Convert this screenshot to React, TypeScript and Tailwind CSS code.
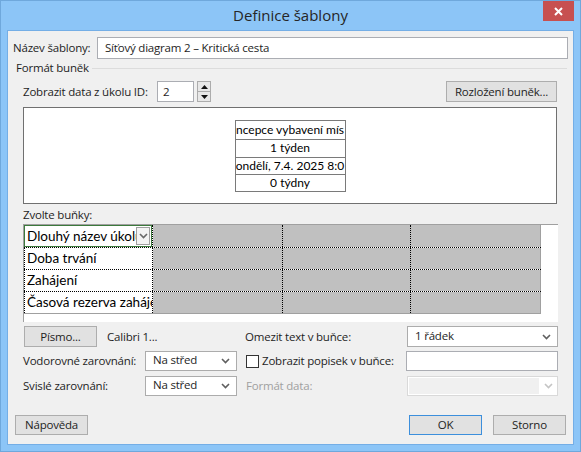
const ui = "font-['Open_Sans',sans-serif] text-[11.5px] tracking-[-0.2px] text-[#1e1e1e] whitespace-nowrap";
const calibri = "font-['Lato',sans-serif] tracking-normal";

function Chevron({ color = "#5f5f5f" }: { color?: string }) {
  return (
    <svg width="9" height="6" viewBox="0 0 9 6" className="block">
      <path d="M1 1 L4.5 4.5 L8 1" fill="none" stroke={color} strokeWidth="1.6" />
    </svg>
  );
}

function Button({ label, width, primary }: { label: string; width: string; primary?: boolean }) {
  return (
    <button
      type="button"
      className={`${width} flex h-full items-center justify-center border bg-[#e1e1e1] leading-none ${
        primary ? "border-[#3c8fdc]" : "border-[#adadad]"
      }`}
    >
      {label}
    </button>
  );
}

function Combo({ value, width }: { value: string; width: string }) {
  return (
    <div className={`${width} flex h-full items-center border border-[#acacac] bg-white pl-[7px] pr-[6px]`}>
      <span className="-mt-[2px] flex-1">{value}</span>
      <Chevron />
    </div>
  );
}

const cellLines = "border-r border-dotted border-black";

function GridRow({ first, height, last, children }: { first?: boolean; height: string; last?: boolean; children: React.ReactNode }) {
  return (
    <div
      className={`flex ${height} ${last ? "border-b border-solid border-[#a0a0a0]" : "border-b border-dotted border-black"}`}
    >
      <div className={`w-[129px] ${first ? "" : "border-l border-dotted border-black"} ${cellLines} overflow-hidden bg-white`}>
        {children}
      </div>
      <div className={`w-[130px] bg-[#c0c0c0] ${cellLines}`} />
      <div className={`w-[128px] bg-[#c0c0c0] ${cellLines}`} />
      <div className="w-[130px] border-r border-[#a0a0a0] bg-[#c0c0c0]" />
    </div>
  );
}

export default function App() {
  const node = ["ncepce vybavení mís", "1 týden", "ondělí, 7.4. 2025 8:0", "0 týdny"];
  const nodeHeights = ["h-[18px]", "h-[18px]", "h-[17px]", "h-[17px]"];

  return (
    <div className={`${ui} flex h-[452px] w-[581px] flex-col border border-[#6fa8dc] bg-[#8cc5f7]`}>
      {/* title bar */}
      <div className="relative flex h-[29px] items-center justify-center">
        <span className="-mt-[1px] text-[15px] tracking-normal text-[#262626]">Definice šablony</span>
        <div className="absolute right-[6px] top-0 flex h-[20px] w-[31px] items-center justify-center bg-[#c75050]">
          <svg width="9" height="9" viewBox="0 0 9 9">
            <path d="M1 1 L8 8 M8 1 L1 8" stroke="white" strokeWidth="2" />
          </svg>
        </div>
      </div>

      {/* client */}
      <div className="mx-[6px] flex h-[415px] flex-col border border-[#74aee6] bg-[#f0f0f0]">
        <div className="mt-[6px] flex h-[22px] items-center">
          <span className="w-[89px] pl-[5px]">Název šablony:</span>
          <div className="flex h-full w-[471px] items-center border border-[#abadb3] bg-white pl-[7px]">
            Síťový diagram 2 – Kritická cesta
          </div>
        </div>

        <div className="mt-[2px] flex h-[14px] items-center">
          <span className="pl-[8px]">Formát buněk</span>
          <div className="ml-[3px] mr-[6px] h-px flex-1 bg-[#dcdcdc]" />
        </div>

        <div className="mt-[6px] flex h-[21px] items-center">
          <span className="w-[149px] pl-[15px]">Zobrazit data z úkolu ID:</span>
          <div className="flex h-full w-[37px] items-center border border-[#abadb3] bg-white pl-[5px]">2</div>
          <div className="ml-[3px] flex h-full w-[14px] flex-col">
            <div className="flex flex-1 items-center justify-center border border-[#acacac] bg-[#e8e8e8]">
              <svg width="7" height="4" viewBox="0 0 7 4"><path d="M0 4 L3.5 0 L7 4 Z" fill="#111" /></svg>
            </div>
            <div className="flex flex-1 items-center justify-center border border-t-0 border-[#acacac] bg-[#e8e8e8]">
              <svg width="7" height="4" viewBox="0 0 7 4"><path d="M0 0 L3.5 4 L7 0 Z" fill="#111" /></svg>
            </div>
          </div>
          <div className="flex-1" />
          <Button label="Rozložení buněk..." width="w-[111px]" />
          <div className="w-[16px]" />
        </div>

        <div className="ml-[15px] mt-[5px] flex h-[97px] w-[534px] items-center justify-center border border-[#707070] bg-white">
          <div className={`${calibri} flex w-[111px] flex-col border border-[#7a7a7a] text-[12px] text-black`}>
            {node.map((t, i) => (
              <div
                key={i}
                className={`${nodeHeights[i]} flex items-center justify-center overflow-hidden ${
                  i > 0 ? "border-t border-[#7a7a7a]" : ""
                }`}
              >
                {t}
              </div>
            ))}
          </div>
        </div>

        <div className="mt-[4px] flex h-[14px] items-center pl-[15px]">Zvolte buňky:</div>

        <div className="ml-[15px] mt-[2px] h-[98px] w-[535px] border-l border-t border-[#a0a0a0] bg-white">
          <div className={`${calibri} w-[517px] text-[13.5px] text-black`}>
            <GridRow first height="h-[23px]">
              <div className="flex h-full items-center border border-[#3c7a3c]">
                <span className="flex-1 overflow-hidden pl-[2px]">Dlouhý název úkolu</span>
                <div className="mr-[1px] flex h-[18px] w-[14px] items-center justify-center border border-[#a0a0a0] bg-[#f4f4f4]">
                  <Chevron color="#6a6a6a" />
                </div>
              </div>
            </GridRow>
            <GridRow height="h-[22px]">
              <div className="flex h-full items-center pl-[2px]">Doba trvání</div>
            </GridRow>
            <GridRow height="h-[22px]">
              <div className="flex h-full items-center pl-[2px]">Zahájení</div>
            </GridRow>
            <GridRow height="h-[22px]" last>
              <div className="flex h-full items-center pl-[2px]">Časová rezerva zahájení</div>
            </GridRow>
          </div>
        </div>

        <div className="mt-[4px] flex h-[21px] items-center">
          <div className="w-[16px]" />
          <Button label="Písmo..." width="w-[73px]" />
          <span className="w-[148px] pl-[10px]">Calibri 1...</span>
          <span className="flex-1">Omezit text v buňce:</span>
          <Combo value="1 řádek" width="w-[151px]" />
          <div className="w-[15px]" />
        </div>

        <div className="mt-[4px] flex h-[20px] items-center">
          <span className="w-[137px] pl-[15px]">Vodorovné zarovnání:</span>
          <Combo value="Na střed" width="w-[92px]" />
          <div className="ml-[9px] h-[13px] w-[13px] border border-[#333] bg-white" />
          <span className="ml-[3px] flex-1">Zobrazit popisek v buňce:</span>
          <div className="h-full w-[152px] border border-[#abadb3] bg-white" />
          <div className="w-[15px]" />
        </div>

        <div className="mt-[5px] flex h-[20px] items-center">
          <span className="w-[137px] pl-[15px]">Svislé zarovnání:</span>
          <Combo value="Na střed" width="w-[92px]" />
          <span className="ml-[9px] flex-1 text-[#a0a0a0]">Formát data:</span>
          <div className="flex h-full w-[151px] border border-[#d9d9d9] bg-white">
            <div className="m-[1px] flex-1 bg-[#f0f0f0]" />
            <div className="flex w-[17px] items-center justify-center">
              <Chevron color="#c4c4c4" />
            </div>
          </div>
          <div className="w-[15px]" />
        </div>

        <div className="mt-[19px] flex h-[20px] items-center">
          <div className="w-[7px]" />
          <Button label="Nápověda" width="w-[73px]" />
          <div className="flex-1" />
          <Button label="OK" width="w-[73px]" primary />
          <div className="w-[11px]" />
          <Button label="Storno" width="w-[73px]" />
          <div className="w-[7px]" />
        </div>
      </div>
    </div>
  );
}
